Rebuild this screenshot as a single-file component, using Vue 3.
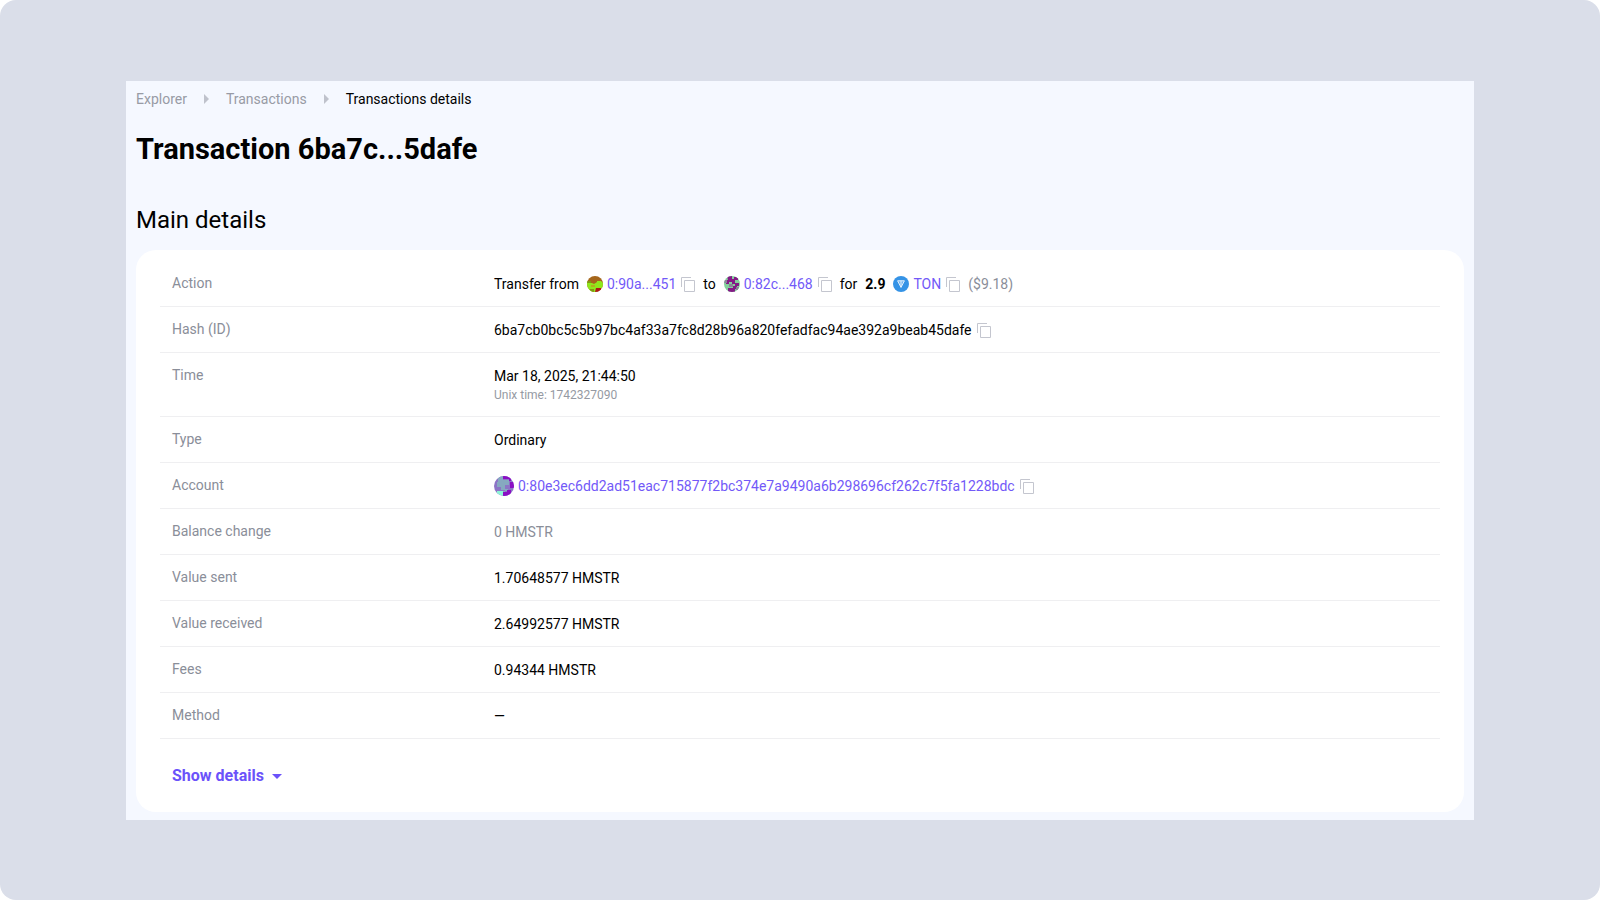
<template>
  <div class="page">
    <main class="panel">
      <nav class="breadcrumbs" aria-label="Breadcrumbs">
        <a href="#explorer">Explorer</a>
        <svg class="crumb-arrow" viewBox="0 0 5 10" aria-hidden="true"><path d="M0 0L5 5L0 10Z" /></svg>
        <a href="#transactions">Transactions</a>
        <svg class="crumb-arrow" viewBox="0 0 5 10" aria-hidden="true"><path d="M0 0L5 5L0 10Z" /></svg>
        <span class="current">Transactions details</span>
      </nav>

      <h1>Transaction 6ba7c...5dafe</h1>
      <h2>Main details</h2>

      <section class="card">
        <table class="details">
          <tbody>
            <tr v-for="row in rows" :key="row.label">
              <th scope="row">{{ row.label }}</th>
              <td>
                <div v-if="row.type === 'action'" class="line">
                  <span class="word">Transfer from</span>
                  <svg class="avatar" viewBox="0 0 16 16" aria-hidden="true">
                    <g clip-path="url(#avatar-clip)">
                      <path fill="#a5661b" d="M0 0h16v16H0z" />
                      <path fill="#8fe81c" d="M0 7h5l2 1 3-2V5h4l2 2v5h-5l-2 4H4l-4-4z" />
                      <path fill="#b0b41c" d="M4 9h4v2H4z" />
                      <path fill="#7f9a12" d="M0 5h4v2H0zM3 13h4v3H3z" />
                      <path fill="#b01818" d="M9 12h5v4H8z" />
                    </g>
                  </svg>
                  <a href="#from">0:90a...451</a>
                  <button class="copy" type="button" aria-label="Copy sender">
                    <svg viewBox="0 0 14 15"><path :d="copyIcon" /></svg>
                  </button>
                  <span class="word">to</span>
                  <svg class="avatar" viewBox="0 0 16 16" aria-hidden="true">
                    <g clip-path="url(#avatar-clip)">
                      <path fill="#83d09b" d="M0 0h16v16H0z" />
                      <path fill="#841a86" d="M3 0h5v3h2V1h4v3h-3v3h4v3h-4V8H8V6H5v2H2V4h2zM4 12h5v-2h4v3h-2v3H4z" />
                      <path fill="#8a8499" d="M0 4h3v3H0zM12 11h3v3h-3zM5 8h4v3H5z" />
                    </g>
                  </svg>
                  <a href="#to">0:82c...468</a>
                  <button class="copy" type="button" aria-label="Copy recipient">
                    <svg viewBox="0 0 14 15"><path :d="copyIcon" /></svg>
                  </button>
                  <span class="word">for</span>
                  <b class="word">2.9</b>
                  <svg class="avatar" viewBox="0 0 16 16" aria-hidden="true">
                    <circle cx="8" cy="8" r="8" fill="#3593e6" />
                    <path d="M4.6 4.8h6.8L8 11.4zM8 4.8v6.4" fill="#6fb2ef" stroke="#e4f1fd" stroke-width="1" stroke-linejoin="round" />
                  </svg>
                  <a href="#ton">TON</a>
                  <button class="copy" type="button" aria-label="Copy token">
                    <svg viewBox="0 0 14 15"><path :d="copyIcon" /></svg>
                  </button>
                  <span class="muted">($9.18)</span>
                </div>

                <div v-else-if="row.type === 'hash'" class="line">
                  <span>{{ row.value }}</span>
                  <button class="copy" type="button" aria-label="Copy hash">
                    <svg viewBox="0 0 14 15"><path :d="copyIcon" /></svg>
                  </button>
                </div>

                <div v-else-if="row.type === 'account'" class="line">
                  <svg class="avatar large" viewBox="0 0 20 20" aria-hidden="true">
                    <g clip-path="url(#account-clip)">
                      <path fill="#8c74c6" d="M0 0h20v20H0z" />
                      <path fill="#86a9c0" d="M4 0h5v4h6v5h-4v5H7v-3H3V6h1zM7 15h4v-2h3v2h-3v2H7z" />
                      <path fill="#8b0fc4" d="M9 0h8v5h-2V3H9zM16 6h4v6h-4zM9 16h4v-2h4v6H9z" />
                      <path fill="#8df5d6" d="M3 15h6v5H3z" />
                    </g>
                  </svg>
                  <a href="#account">{{ row.value }}</a>
                  <button class="copy" type="button" aria-label="Copy account">
                    <svg viewBox="0 0 14 15"><path :d="copyIcon" /></svg>
                  </button>
                </div>

                <template v-else>
                  <span :class="{ muted: row.muted }">{{ row.value }}</span>
                  <small v-if="row.note">{{ row.note }}</small>
                </template>
              </td>
            </tr>
          </tbody>
        </table>

        <button class="show-details" type="button">
          Show details
          <svg viewBox="0 0 10 5" aria-hidden="true"><path d="M0 0H10L5 5Z" /></svg>
        </button>
      </section>
    </main>

    <svg class="defs" aria-hidden="true">
      <clipPath id="avatar-clip"><circle cx="8" cy="8" r="8" /></clipPath>
      <clipPath id="account-clip"><circle cx="10" cy="10" r="10" /></clipPath>
    </svg>
  </div>
</template>

<script setup>
const copyIcon = 'M0.5 10V0.5H10M3.5 3.5H13.5V14.5H3.5Z';

const rows = [
  { label: 'Action', type: 'action' },
  { label: 'Hash (ID)', type: 'hash', value: '6ba7cb0bc5c5b97bc4af33a7fc8d28b96a820fefadfac94ae392a9beab45dafe' },
  { label: 'Time', value: 'Mar 18, 2025, 21:44:50', note: 'Unix time: 1742327090' },
  { label: 'Type', value: 'Ordinary' },
  { label: 'Account', type: 'account', value: '0:80e3ec6dd2ad51eac715877f2bc374e7a9490a6b298696cf262c7f5fa1228bdc' },
  { label: 'Balance change', value: '0 HMSTR', muted: true },
  { label: 'Value sent', value: '1.70648577 HMSTR' },
  { label: 'Value received', value: '2.64992577 HMSTR' },
  { label: 'Fees', value: '0.94344 HMSTR' },
  { label: 'Method', value: '—' },
];
</script>

<style>
body {
  margin: 0;
  background: #fff;
}
</style>

<style scoped>
.page {
  box-sizing: border-box;
  min-height: 100vh;
  padding: 81px 126px 80px;
  border-radius: 16px;
  background: #dadee9;
  color: #000;
  font-family: Roboto, "Liberation Sans", sans-serif;
  font-size: 14px;
  line-height: 20px;
}

.panel {
  padding: 8px 10px;
  background: #f5f8ff;
}

.breadcrumbs {
  display: flex;
  align-items: center;
  gap: 17px;
}

.breadcrumbs a {
  color: #989ba5;
}

.crumb-arrow {
  width: 5px;
  height: 10px;
  fill: #bfc2cc;
}

a {
  color: #7259f8;
  text-decoration: none;
}

h1 {
  margin: 24px 0 0;
  font-size: 29px;
  line-height: 32px;
  font-weight: 700;
}

h2 {
  margin: 40px 0 0;
  font-size: 24px;
  line-height: 30px;
  font-weight: 400;
}

.card {
  margin-top: 15px;
  padding: 11px 24px 26px;
  border-radius: 20px;
  background: #fff;
}

.details {
  width: 100%;
  border-collapse: separate;
  border-spacing: 0;
  table-layout: fixed;
}

th,
td {
  padding: 13px 12px 12px;
  border-bottom: 1px solid #efeff1;
  text-align: left;
  vertical-align: top;
  font-weight: 400;
}

th {
  width: 298px;
  padding: 12px 12px 13px;
  color: #8a8e99;
}

.line {
  display: flex;
  align-items: center;
  height: 20px;
}

.word {
  margin-right: 8px;
}

.muted {
  color: #8a8e99;
}

small {
  display: block;
  color: #959aa3;
  font-size: 12px;
  line-height: 18px;
}

.avatar {
  flex: none;
  width: 16px;
  height: 16px;
  margin-right: 4px;
}

.avatar.large {
  width: 20px;
  height: 20px;
}

.copy {
  display: flex;
  flex: none;
  margin: 0 8px 0 5px;
  padding: 0;
  border: none;
  background: none;
  cursor: pointer;
}

.copy svg {
  width: 14px;
  height: 15px;
  fill: none;
  stroke: #c4c6cf;
}

.show-details {
  display: flex;
  align-items: center;
  gap: 8px;
  margin-top: 27px;
  padding: 0 12px;
  border: none;
  background: none;
  color: #6b52fa;
  font: 700 16px/20px Roboto, "Liberation Sans", sans-serif;
  cursor: pointer;
}

.show-details svg {
  width: 10px;
  height: 5px;
  fill: #6b52fa;
}

.defs {
  position: absolute;
  width: 0;
  height: 0;
}
</style>
